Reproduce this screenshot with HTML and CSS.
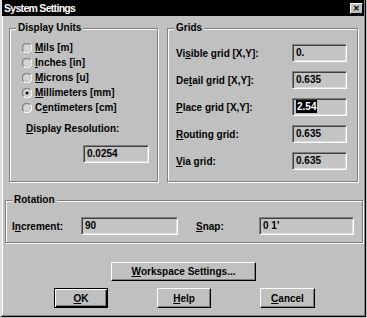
FILE: index.html
```html
<!DOCTYPE html>
<html>
<head>
<meta charset="utf-8">
<link rel="stylesheet" href="styles.css">
</head>
<body>
<div class="dialog">
  <div class="titlebar">
    <span class="title">System Settings</span>
    <span class="close">&#x2715;</span>
  </div>
  <div class="content">
    <div class="top-row">
      <div class="group units">
        <span class="legend">Display Units</span>
        <div class="radios">
          <div class="radio"><svg class="rb" viewBox="0 0 12 12"><path d="M10 2 A5 5 0 0 0 2 10" fill="none" stroke="#808080" stroke-width="1.3"/><path d="M2 10 A5 5 0 0 0 10 2" fill="none" stroke="#fff" stroke-width="1.3"/><circle cx="6" cy="6" r="3.8" fill="#d4d4d4"/></svg><span><u>M</u>ils [m]</span></div>
          <div class="radio"><svg class="rb" viewBox="0 0 12 12"><path d="M10 2 A5 5 0 0 0 2 10" fill="none" stroke="#808080" stroke-width="1.3"/><path d="M2 10 A5 5 0 0 0 10 2" fill="none" stroke="#fff" stroke-width="1.3"/><circle cx="6" cy="6" r="3.8" fill="#d4d4d4"/></svg><span><u>I</u>nches [in]</span></div>
          <div class="radio"><svg class="rb" viewBox="0 0 12 12"><path d="M10 2 A5 5 0 0 0 2 10" fill="none" stroke="#808080" stroke-width="1.3"/><path d="M2 10 A5 5 0 0 0 10 2" fill="none" stroke="#fff" stroke-width="1.3"/><circle cx="6" cy="6" r="3.8" fill="#d4d4d4"/></svg><span><u>M</u>icrons [u]</span></div>
          <div class="radio"><svg class="rb" viewBox="0 0 12 12"><path d="M10 2 A5 5 0 0 0 2 10" fill="none" stroke="#808080" stroke-width="1.3"/><path d="M2 10 A5 5 0 0 0 10 2" fill="none" stroke="#fff" stroke-width="1.3"/><circle cx="6" cy="6" r="3.8" fill="#d4d4d4"/><circle cx="6" cy="6" r="1.8" fill="#000"/></svg><span><u>M</u>illimeters [mm]</span></div>
          <div class="radio"><svg class="rb" viewBox="0 0 12 12"><path d="M10 2 A5 5 0 0 0 2 10" fill="none" stroke="#808080" stroke-width="1.3"/><path d="M2 10 A5 5 0 0 0 10 2" fill="none" stroke="#fff" stroke-width="1.3"/><circle cx="6" cy="6" r="3.8" fill="#d4d4d4"/></svg><span>C<u>e</u>ntimeters [cm]</span></div>
        </div>
        <div class="res-label"><u>D</u>isplay Resolution:</div>
        <div class="field res">0.0254</div>
      </div>
      <div class="group grids">
        <span class="legend">Grids</span>
        <div class="grid-rows">
          <div class="grow"><span class="glabel">Vi<u>s</u>ible grid [X,Y]:</span><div class="field gfield">0.</div></div>
          <div class="grow"><span class="glabel">De<u>t</u>ail grid [X,Y]:</span><div class="field gfield">0.635</div></div>
          <div class="grow"><span class="glabel"><u>P</u>lace grid [X,Y]:</span><div class="field gfield"><span class="sel">2.54</span></div></div>
          <div class="grow"><span class="glabel"><u>R</u>outing grid:</span><div class="field gfield">0.635</div></div>
          <div class="grow"><span class="glabel"><u>V</u>ia grid:</span><div class="field gfield">0.635</div></div>
        </div>
      </div>
    </div>
    <div class="group rotation">
      <span class="legend">Rotation</span>
      <div class="rot-row">
        <span class="inc-label">I<u>n</u>crement:</span>
        <div class="field inc">90</div>
        <span class="snap-label"><u>S</u>nap:</span>
        <div class="field snap">0 1'</div>
      </div>
    </div>
    <div class="btn-row1">
      <div class="btn wide"><u>W</u>orkspace Settings...</div>
    </div>
    <div class="btn-row2">
      <div class="btn def"><u>O</u>K</div>
      <div class="btn"><u>H</u>elp</div>
      <div class="btn cancel"><u>C</u>ancel</div>
    </div>
  </div>
</div>
</body>
</html>
```

FILE: styles.css
```css
html, body {
  margin: 0;
  padding: 0;
  background: #c0c0c0;
}
body {
  width: 367px;
  height: 318px;
  overflow: hidden;
  font-family: "Liberation Sans", Arial, sans-serif;
  font-weight: bold;
  font-size: 10px;
  color: #000;
}
.dialog {
  box-sizing: border-box;
  width: 366px;
  height: 317px;
  background: #c0c0c0;
  border-left: 2px solid #dfdfdf;
  border-right: 1px solid #000;
  border-bottom: 1px solid #000;
  box-shadow: inset -1px -1px 0 #808080, inset 1px 0 0 #fff;
}
.titlebar {
  height: 16px;
  background: #000;
  color: #fff;
  display: flex;
  align-items: center;
  justify-content: space-between;
  padding: 0 1px 0 2px;
  margin-right: 1px;
}
.title {
  font-size: 10.5px;
  letter-spacing: -0.7px;
  line-height: 12px;
}
.close {
  box-sizing: border-box;
  width: 13px;
  height: 11px;
  background: #c0c0c0;
  color: #000;
  font-size: 8px;
  line-height: 9px;
  text-align: center;
  border-top: 1px solid #fff;
  border-left: 1px solid #fff;
  border-right: 1px solid #000;
  border-bottom: 1px solid #000;
}
.content {
  padding: 12px 0 0 3px;
}
.top-row {
  display: flex;
  gap: 9px;
  margin-left: 4px;
}
.group {
  box-sizing: border-box;
  border: 1px solid #808080;
  box-shadow: 1px 1px 0 #fff, inset 1px 1px 0 #fff;
}
.legend {
  display: table;
  background: #c0c0c0;
  padding: 0 2px;
  margin: -7px 0 0 6px;
  line-height: 12px;
}
.units {
  width: 149px;
  height: 154px;
}
.grids {
  width: 191px;
  height: 154px;
}
.radios {
  margin-top: 6px;
  padding-left: 12px;
}
.radio {
  height: 15px;
  display: flex;
  align-items: center;
  gap: 3px;
}
.rb {
  width: 10px;
  height: 10px;
}
.res-label {
  margin-top: 8px;
  padding-left: 16px;
  line-height: 12px;
}
.field {
  box-sizing: border-box;
  height: 18px;
  border-top: 1px solid #808080;
  border-left: 1px solid #808080;
  border-right: 1px solid #fff;
  border-bottom: 1px solid #fff;
  box-shadow: inset 1px 1px 0 #404040, inset -1px -1px 0 #dfdfdf;
  padding: 0 0 0 3px;
  line-height: 16px;
  background: #c4c4c4;
}
.res {
  width: 66px;
  margin: 10px 0 0 73px;
}
.grid-rows {
  margin-top: 10px;
  display: flex;
  flex-direction: column;
  gap: 9px;
}
.grow {
  display: flex;
  align-items: center;
  padding-left: 8px;
}
.glabel {
  width: 116px;
}
.gfield {
  width: 55px;
}
.sel {
  background: #000;
  color: #fff;
  padding: 1px 1px;
}
.rotation {
  width: 358px;
  height: 43px;
  margin-top: 18px;
}
.rot-row {
  display: flex;
  align-items: center;
  margin-top: 11px;
  padding-left: 6px;
}
.inc-label {
  width: 69px;
}
.inc {
  width: 97px;
}
.snap-label {
  width: 63px;
  margin-left: 18px;
}
.snap {
  width: 95px;
}
.btn-row1 {
  display: flex;
  justify-content: center;
  margin-top: 19px;
  padding-right: 3px;
}
.btn {
  box-sizing: border-box;
  width: 54px;
  height: 20px;
  display: flex;
  align-items: center;
  justify-content: center;
  background: #c0c0c0;
  border-top: 1px solid #fff;
  border-left: 1px solid #fff;
  border-right: 1px solid #000;
  border-bottom: 1px solid #000;
  box-shadow: inset -1px -1px 0 #808080;
}
.wide {
  width: 145px;
  height: 19px;
}
.btn-row2 {
  display: flex;
  gap: 49px;
  margin-top: 7px;
  padding-left: 49px;
}
.def {
  border: 1px solid #000;
  box-shadow: inset 1px 1px 0 #fff, inset -1px -1px 0 #000, inset -2px -2px 0 #808080;
}
.cancel {
  width: 55px;
}
```
